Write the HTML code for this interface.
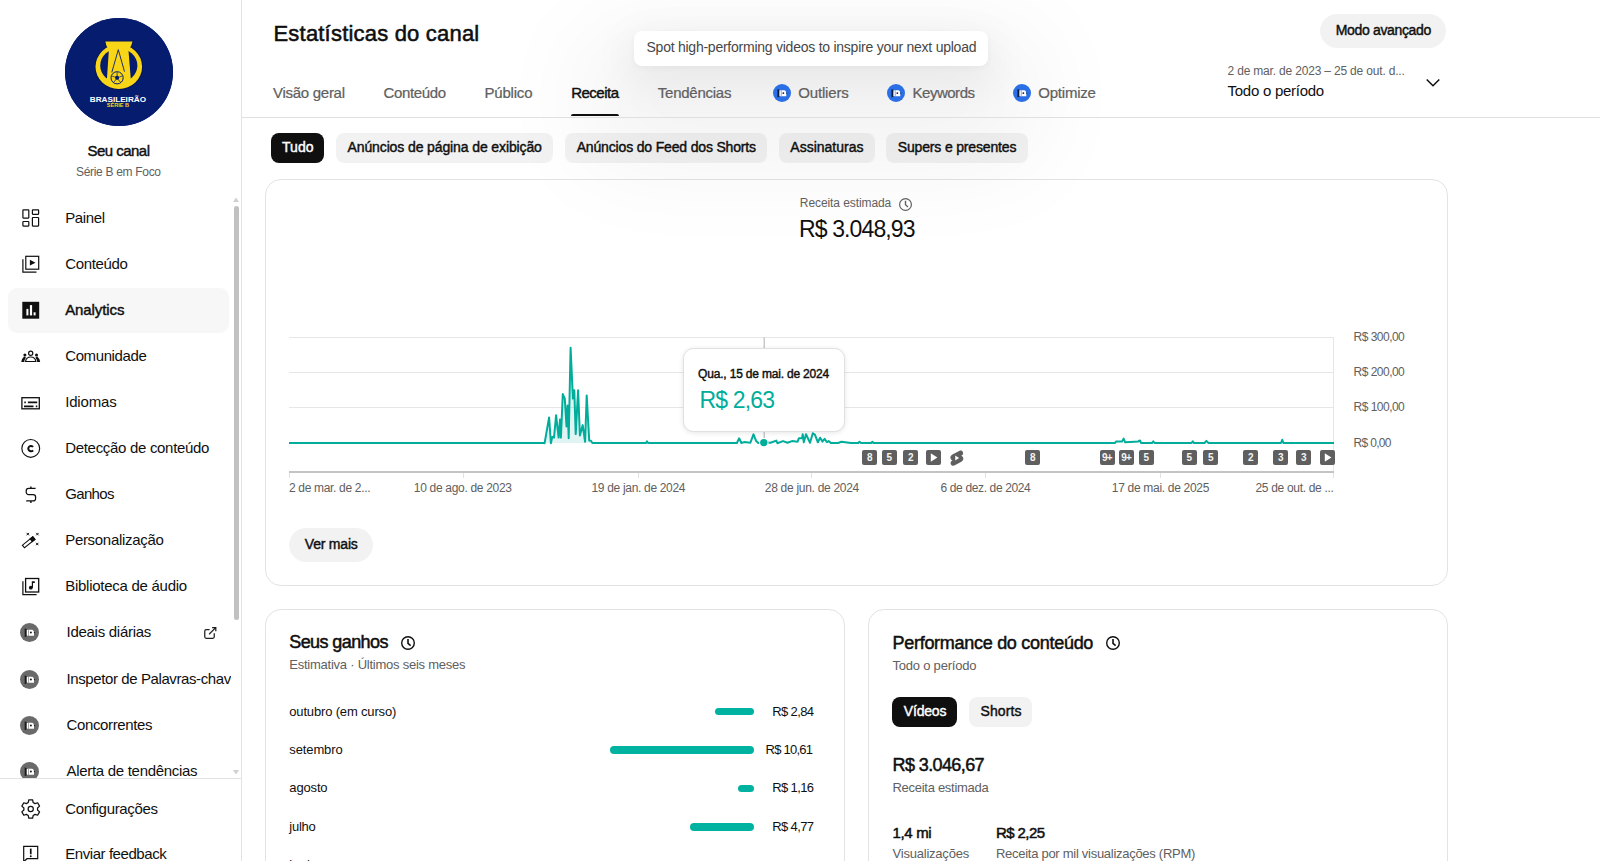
<!DOCTYPE html>
<html lang="pt-BR">
<head>
<meta charset="utf-8">
<title>Estatísticas do canal</title>
<style>
*{box-sizing:border-box;margin:0;padding:0}
html,body{width:1600px;height:861px;overflow:hidden;background:#fff}
body{font-family:"Liberation Sans",sans-serif;color:#0f0f0f;position:relative}
.a{position:absolute}
#side{position:absolute;z-index:6;left:0;top:0;width:242px;height:861px;border-right:1px solid #e3e3e3;background:#fff;overflow:hidden}
#main{position:absolute;left:0;top:0;width:1600px;height:861px;overflow:hidden}
.card{position:absolute;border:1px solid #e3e3e3;border-radius:16px;background:#fff}
.chip{position:absolute;height:30px;border-radius:8px;background:rgba(0,0,0,0.052)}
.chip.on{background:#0f0f0f}
.pill{position:absolute;background:rgba(0,0,0,0.052);border-radius:17px}
.gl{position:absolute;left:289px;width:1045px;height:1px;background:#e6e6e6}
.bd{position:absolute;top:450px;width:15px;height:15px;border-radius:2px;background:#5f5f5f;color:#f4f4f4;font-size:10px;font-weight:700;line-height:15px;text-align:center}
.iq{position:absolute;width:19px;height:19px;border-radius:50%;background:#6a6a6a}
</style>
</head>
<body>
<div id="main">
<div style="position:absolute;white-space:nowrap;line-height:1;top:23.13px;font-size:22px;color:#0f0f0f;letter-spacing:0.198px;-webkit-text-stroke:0.55px #0f0f0f;left:273.50px;">Estatísticas do canal</div>
<div class="a" style="left:634px;top:31px;width:354px;height:34.500px;border-radius:8px;background:#fff;box-shadow:0 50px 100px 50px rgba(0,0,0,0.05),0 12px 40px 8px rgba(0,0,0,0.05),0 2px 6px rgba(0,0,0,0.04);z-index:3"></div>
<div style="position:absolute;white-space:nowrap;line-height:1;top:40.35px;font-size:14px;color:#474747;letter-spacing:-0.245px;z-index:4;left:646.50px;">Spot high-performing videos to inspire your next upload</div>
<div style="position:absolute;white-space:nowrap;line-height:1;top:85.30px;font-size:15px;color:#606060;letter-spacing:-0.278px;-webkit-text-stroke:0.22px #606060;z-index:4;left:273.00px;">Visão geral</div>
<div style="position:absolute;white-space:nowrap;line-height:1;top:85.30px;font-size:15px;color:#606060;letter-spacing:-0.366px;-webkit-text-stroke:0.22px #606060;z-index:4;left:383.50px;">Conteúdo</div>
<div style="position:absolute;white-space:nowrap;line-height:1;top:85.30px;font-size:15px;color:#606060;letter-spacing:-0.201px;-webkit-text-stroke:0.22px #606060;z-index:4;left:484.50px;">Público</div>
<div style="position:absolute;white-space:nowrap;line-height:1;top:85.30px;font-size:15px;color:#0f0f0f;letter-spacing:-0.510px;-webkit-text-stroke:0.42px #0f0f0f;z-index:4;left:571.20px;">Receita</div>
<div style="position:absolute;white-space:nowrap;line-height:1;top:85.30px;font-size:15px;color:#606060;letter-spacing:-0.255px;-webkit-text-stroke:0.22px #606060;z-index:4;left:657.80px;">Tendências</div>
<div style="position:absolute;white-space:nowrap;line-height:1;top:85.30px;font-size:15px;color:#606060;letter-spacing:-0.184px;-webkit-text-stroke:0.22px #606060;z-index:4;left:798.30px;">Outliers</div>
<div style="position:absolute;white-space:nowrap;line-height:1;top:85.30px;font-size:15px;color:#606060;letter-spacing:-0.480px;-webkit-text-stroke:0.22px #606060;z-index:4;left:912.50px;">Keywords</div>
<div style="position:absolute;white-space:nowrap;line-height:1;top:85.30px;font-size:15px;color:#606060;letter-spacing:-0.227px;-webkit-text-stroke:0.22px #606060;z-index:4;left:1038.30px;">Optimize</div>
<div class="a" style="left:772.75px;top:84.200px;width:18px;height:18px;border-radius:50%;background:#2b6fe6;z-index:4"><svg viewBox="0 0 19 19" width="18" height="18" style="display:block"><path d="M4.700 5.200L7.600 6.700V12.800L4.700 14.300Z" fill="#0d1b3a"/><path d="M6.700 6.700H12.200Q14 7.300 14 9.200V12.800H6.700Z" fill="#fff"/><rect x="8.300" y="6.700" width="0.600" height="6.100" fill="#2b6fe6"/><circle cx="10.900" cy="9.600" r="1" fill="#0d1b3a"/><circle cx="14.500" cy="9.600" r="0.650" fill="#0d1b3a"/></svg></div>
<div class="a" style="left:886.75px;top:84.200px;width:18px;height:18px;border-radius:50%;background:#2b6fe6;z-index:4"><svg viewBox="0 0 19 19" width="18" height="18" style="display:block"><path d="M4.700 5.200L7.600 6.700V12.800L4.700 14.300Z" fill="#0d1b3a"/><path d="M6.700 6.700H12.200Q14 7.300 14 9.200V12.800H6.700Z" fill="#fff"/><rect x="8.300" y="6.700" width="0.600" height="6.100" fill="#2b6fe6"/><circle cx="10.900" cy="9.600" r="1" fill="#0d1b3a"/><circle cx="14.500" cy="9.600" r="0.650" fill="#0d1b3a"/></svg></div>
<div class="a" style="left:1012.75px;top:84.200px;width:18px;height:18px;border-radius:50%;background:#2b6fe6;z-index:4"><svg viewBox="0 0 19 19" width="18" height="18" style="display:block"><path d="M4.700 5.200L7.600 6.700V12.800L4.700 14.300Z" fill="#0d1b3a"/><path d="M6.700 6.700H12.200Q14 7.300 14 9.200V12.800H6.700Z" fill="#fff"/><rect x="8.300" y="6.700" width="0.600" height="6.100" fill="#2b6fe6"/><circle cx="10.900" cy="9.600" r="1" fill="#0d1b3a"/><circle cx="14.500" cy="9.600" r="0.650" fill="#0d1b3a"/></svg></div>
<div class="a" style="left:570.500px;top:113.700px;width:48px;height:2.700px;background:#0f0f0f;border-radius:2px 2px 0 0;z-index:4"></div>
<div class="a" style="left:242px;top:116.600px;width:1358px;height:1px;background:#e0e0e0;z-index:4"></div>
<div class="pill" style="left:1319.700px;top:13.500px;width:126px;height:34.200px;z-index:4"></div>
<div style="position:absolute;white-space:nowrap;line-height:1;top:23.25px;font-size:14px;color:#0f0f0f;letter-spacing:-0.345px;-webkit-text-stroke:0.42px #0f0f0f;z-index:4;left:1335.80px;">Modo avançado</div>
<div style="position:absolute;white-space:nowrap;line-height:1;top:64.54px;font-size:12px;color:#606060;letter-spacing:-0.181px;z-index:4;left:1227.50px;">2 de mar. de 2023 – 25 de out. d...</div>
<div style="position:absolute;white-space:nowrap;line-height:1;top:82.70px;font-size:15px;color:#0f0f0f;letter-spacing:-0.260px;z-index:4;left:1227.50px;">Todo o período</div>
<svg class="a" style="left:1423.600px;top:74px;z-index:4" width="18" height="18" viewBox="0 0 18 18"><path d="M2.700 5.500l6.300 6.300 6.300-6.300" fill="none" stroke="#0f0f0f" stroke-width="1.500"/></svg>
<div class="chip on" style="left:270.7px;top:133px;width:53.6px;z-index:4"></div>
<div style="position:absolute;white-space:nowrap;line-height:1;top:140.45px;font-size:14px;color:#fff;letter-spacing:0.036px;-webkit-text-stroke:0.42px #fff;z-index:4;left:282.00px;">Tudo</div>
<div class="chip" style="left:336px;top:133px;width:217.2px;z-index:4"></div>
<div style="position:absolute;white-space:nowrap;line-height:1;top:140.45px;font-size:14px;color:#0f0f0f;letter-spacing:-0.114px;-webkit-text-stroke:0.42px #0f0f0f;z-index:4;left:347.50px;">Anúncios de página de exibição</div>
<div class="chip" style="left:564.8px;top:133px;width:202.5px;z-index:4"></div>
<div style="position:absolute;white-space:nowrap;line-height:1;top:140.45px;font-size:14px;color:#0f0f0f;letter-spacing:-0.164px;-webkit-text-stroke:0.42px #0f0f0f;z-index:4;left:576.70px;">Anúncios do Feed dos Shorts</div>
<div class="chip" style="left:778.8px;top:133px;width:95.9px;z-index:4"></div>
<div style="position:absolute;white-space:nowrap;line-height:1;top:140.45px;font-size:14px;color:#0f0f0f;-webkit-text-stroke:0.42px #0f0f0f;z-index:4;left:790.30px;">Assinaturas</div>
<div class="chip" style="left:886.3px;top:133px;width:141.3px;z-index:4"></div>
<div style="position:absolute;white-space:nowrap;line-height:1;top:140.45px;font-size:14px;color:#0f0f0f;letter-spacing:-0.165px;-webkit-text-stroke:0.42px #0f0f0f;z-index:4;left:897.80px;">Supers e presentes</div>
<div class="card" style="left:265px;top:179px;width:1183px;height:407px"></div>
<div style="position:absolute;white-space:nowrap;line-height:1;top:197.34px;font-size:12px;color:#606060;letter-spacing:-0.085px;z-index:4;left:799.80px;">Receita estimada</div>
<svg class="a" style="left:898.25px;top:196.50px;z-index:4" width="15" height="15" viewBox="0 0 15 15"><circle cx="7.5" cy="7.5" r="5.9" fill="none" stroke="#606060" stroke-width="1.2"/><path d="M7.5 3.84V7.8l2.48 2.12" fill="none" stroke="#606060" stroke-width="1.4"/></svg>
<div style="position:absolute;white-space:nowrap;line-height:1;top:218.03px;font-size:23px;color:#0f0f0f;letter-spacing:-0.883px;z-index:4;left:799.00px;">R$ 3.048,93</div>
<div class="gl" style="top:336.7px"></div>
<div class="gl" style="top:371.7px"></div>
<div class="gl" style="top:406.7px"></div>
<div class="a" style="left:1333.300px;top:337px;width:1px;height:135px;background:#e6e6e6"></div>
<div style="position:absolute;white-space:nowrap;line-height:1;top:331.34px;font-size:12px;color:#606060;letter-spacing:-0.511px;left:1353.50px;">R$ 300,00</div>
<div style="position:absolute;white-space:nowrap;line-height:1;top:366.44px;font-size:12px;color:#606060;letter-spacing:-0.511px;left:1353.50px;">R$ 200,00</div>
<div style="position:absolute;white-space:nowrap;line-height:1;top:401.44px;font-size:12px;color:#606060;letter-spacing:-0.511px;left:1353.50px;">R$ 100,00</div>
<div style="position:absolute;white-space:nowrap;line-height:1;top:436.54px;font-size:12px;color:#606060;letter-spacing:-0.672px;left:1353.50px;">R$ 0,00</div>
<div class="a" style="left:289px;top:470.800px;width:1045px;height:1.800px;background:#c4c4c4"></div>
<div class="a" style="left:289.0px;top:472.500px;width:1px;height:5px;background:#e2e2e2"></div>
<div class="a" style="left:462.5px;top:472.500px;width:1px;height:5px;background:#e2e2e2"></div>
<div class="a" style="left:637.5px;top:472.500px;width:1px;height:5px;background:#e2e2e2"></div>
<div class="a" style="left:811.0px;top:472.500px;width:1px;height:5px;background:#e2e2e2"></div>
<div class="a" style="left:985.0px;top:472.500px;width:1px;height:5px;background:#e2e2e2"></div>
<div class="a" style="left:1159.5px;top:472.500px;width:1px;height:5px;background:#e2e2e2"></div>
<div class="a" style="left:1332.8px;top:472.500px;width:1px;height:5px;background:#e2e2e2"></div>
<div style="position:absolute;white-space:nowrap;line-height:1;top:481.59px;font-size:12px;color:#606060;letter-spacing:-0.326px;left:289.00px;">2 de mar. de 2...</div>
<div style="position:absolute;white-space:nowrap;line-height:1;top:481.59px;font-size:12px;color:#606060;letter-spacing:-0.308px;left:413.80px;">10 de ago. de 2023</div>
<div style="position:absolute;white-space:nowrap;line-height:1;top:481.59px;font-size:12px;color:#606060;letter-spacing:-0.319px;left:591.50px;">19 de jan. de 2024</div>
<div style="position:absolute;white-space:nowrap;line-height:1;top:481.59px;font-size:12px;color:#606060;letter-spacing:-0.292px;left:764.80px;">28 de jun. de 2024</div>
<div style="position:absolute;white-space:nowrap;line-height:1;top:481.59px;font-size:12px;color:#606060;letter-spacing:-0.362px;left:940.50px;">6 de dez. de 2024</div>
<div style="position:absolute;white-space:nowrap;line-height:1;top:481.59px;font-size:12px;color:#606060;letter-spacing:-0.303px;left:1111.80px;">17 de mai. de 2025</div>
<div style="position:absolute;white-space:nowrap;line-height:1;top:481.59px;font-size:12px;color:#606060;letter-spacing:-0.319px;left:1255.50px;">25 de out. de ...</div>
<svg class="a" style="left:0;top:0;z-index:2" width="1600" height="500" viewBox="0 0 1600 500"><g transform="translate(0 0.3)"><path d="M764.250 337V441" stroke="#c9c9c9" stroke-width="1.500"/><path d="M544.6 442.7 L544.6 442.9 L549.1 417.1 L550.9 442.9 L552.3 436.6 L554.0 437.3 L556.1 415.0 L558.6 437.3 L560.0 419.2 L560.9 437.3 L562.8 393.8 L564.8 398.3 L566.5 426.2 L567.6 405.3 L568.7 438.0 L570.6 347.4 L572.9 398.3 L574.3 389.9 L575.7 433.8 L578.1 389.9 L579.9 435.2 L582.7 424.8 L585.1 441.5 L586.7 395.2 L589.2 440.1 L590.9 440.4 L592.4 442.7 Z" fill="#00ad9b" fill-opacity="0.12"/><path d="M289.0 442.7 L544.0 442.7 L544.6 442.9 L549.1 417.1 L550.9 442.9 L552.3 436.6 L554.0 437.3 L556.1 415.0 L558.6 437.3 L560.0 419.2 L560.9 437.3 L562.8 393.8 L564.8 398.3 L566.5 426.2 L567.6 405.3 L568.7 438.0 L570.6 347.4 L572.9 398.3 L574.3 389.9 L575.7 433.8 L578.1 389.9 L579.9 435.2 L582.7 424.8 L585.1 441.5 L586.7 395.2 L589.2 440.1 L590.9 440.4 L592.4 442.7 L646.0 442.7 L647.0 441.0 L648.0 442.7 L736.9 442.7 L739.1 438.0 L741.4 442.7 L744.0 441.8 L750.4 442.4 L753.5 434.1 L756.2 440.8 L758.3 442.7 L764.0 441.9 L770.6 442.4 L776.3 440.3 L777.4 442.9 L783.0 440.8 L787.5 442.5 L792.0 440.8 L797.6 441.4 L798.8 438.0 L802.0 438.0 L802.7 434.0 L803.8 442.0 L806.0 434.0 L810.0 442.5 L812.8 433.0 L815.0 434.6 L817.9 442.0 L820.1 437.4 L822.4 441.3 L824.6 438.6 L826.9 441.9 L828.6 440.8 L830.8 442.7 L838.0 442.7 L841.5 441.4 L847.0 442.2 L851.0 442.7 L858.3 442.7 L859.5 441.4 L861.0 442.7 L871.2 442.7 L872.4 441.4 L873.5 442.7 L1115.0 442.7 L1116.0 441.3 L1122.0 441.3 L1123.6 438.3 L1125.2 442.0 L1134.5 441.4 L1138.0 441.2 L1140.0 440.2 L1141.0 442.6 L1152.0 442.7 L1153.3 441.1 L1154.5 442.7 L1191.5 442.7 L1192.7 441.1 L1194.0 442.7 L1204.5 442.7 L1206.4 440.6 L1208.5 442.7 L1281.0 442.7 L1282.2 439.5 L1283.4 442.7 L1334.0 442.7" fill="none" stroke="#00ad9b" stroke-width="2" stroke-linejoin="round"/><circle cx="763.800" cy="442.300" r="4.700" fill="#fff"/><circle cx="763.800" cy="442.300" r="3.700" fill="#00ad9b"/></g></svg>
<div class="bd" style="left:862.2px">8</div>
<div class="bd" style="left:881.8px">5</div>
<div class="bd" style="left:903.3px">2</div>
<div class="bd" style="left:1025.4px">8</div>
<div class="bd" style="left:1099.8px;letter-spacing:-0.8px;text-indent:-1px">9+</div>
<div class="bd" style="left:1119.2px;letter-spacing:-0.8px;text-indent:-1px">9+</div>
<div class="bd" style="left:1138.8px">5</div>
<div class="bd" style="left:1181.9px">5</div>
<div class="bd" style="left:1203.4px">5</div>
<div class="bd" style="left:1243.4px">2</div>
<div class="bd" style="left:1273.4px">3</div>
<div class="bd" style="left:1296.2px">3</div>
<div class="bd" style="left:925.8px"><svg width="15" height="15" viewBox="0 0 15 15" style="display:block"><path d="M4.800 3.200l6.600 4.300-6.600 4.300z" fill="#fff"/></svg></div>
<div class="bd" style="left:1320px"><svg width="15" height="15" viewBox="0 0 15 15" style="display:block"><path d="M4.800 3.200l6.600 4.300-6.600 4.300z" fill="#fff"/></svg></div>
<svg class="a" style="left:948.300px;top:448.800px" width="17.500" height="18" viewBox="0 0 16 16"><path d="M10.200 1.600L4 4.900c-1.700.9-2.200 2.600-1.500 4 .4.800 1 1.200 1.700 1.400l-.6.300c-1.300.8-1.500 2.300-.9 3.300.7 1.200 2.200 1.500 3.500.8l6-3.300c1.700-.9 2.200-2.600 1.500-4-.4-.8-1-1.200-1.700-1.400l.6-.3c1.300-.8 1.500-2.300.9-3.300-.7-1.200-2.100-1.500-3.300-.8z" fill="#5f5f5f"/><path d="M6.600 5.800l3.600 2.200-3.600 2.200z" fill="#fff"/></svg>
<div class="a" style="left:682.600px;top:348.400px;width:162px;height:83.200px;border-radius:10.500px;background:#fff;border:1px solid #e0e0e0;box-shadow:0 1px 5px rgba(0,0,0,0.10);z-index:3"></div>
<div style="position:absolute;white-space:nowrap;line-height:1;top:367.84px;font-size:12px;color:#0f0f0f;letter-spacing:-0.186px;-webkit-text-stroke:0.42px #0f0f0f;z-index:4;left:698.10px;">Qua., 15 de mai. de 2024</div>
<div style="position:absolute;white-space:nowrap;line-height:1;top:388.53px;font-size:23px;color:#00ad9b;letter-spacing:-0.844px;z-index:4;left:699.50px;">R$ 2,63</div>
<div class="pill" style="left:288.500px;top:527.700px;width:84px;height:34px"></div>
<div style="position:absolute;white-space:nowrap;line-height:1;top:536.75px;font-size:14px;color:#0f0f0f;letter-spacing:-0.210px;-webkit-text-stroke:0.42px #0f0f0f;left:304.80px;">Ver mais</div>
<div class="card" style="left:265px;top:609.400px;width:579.600px;height:300px"></div>
<div class="card" style="left:868px;top:609.400px;width:580px;height:300px"></div>
<div style="position:absolute;white-space:nowrap;line-height:1;top:632.76px;font-size:18px;color:#0f0f0f;letter-spacing:-0.599px;-webkit-text-stroke:0.5px #0f0f0f;left:289.30px;">Seus ganhos</div>
<svg class="a" style="left:400.00px;top:635.00px;z-index:4" width="16" height="16" viewBox="0 0 16 16"><circle cx="8.0" cy="8.0" r="6.3" fill="none" stroke="#0f0f0f" stroke-width="1.4"/><path d="M8.0 4.09V8.3l2.65 2.27" fill="none" stroke="#0f0f0f" stroke-width="1.5999999999999999"/></svg>
<div style="position:absolute;white-space:nowrap;line-height:1;top:658.40px;font-size:13px;color:#606060;letter-spacing:-0.243px;left:289.30px;">Estimativa · Últimos seis meses</div>
<div style="position:absolute;white-space:nowrap;line-height:1;top:704.50px;font-size:13px;color:#0f0f0f;letter-spacing:-0.166px;left:289.30px;">outubro (em curso)</div>
<div class="a" style="left:715.3px;top:707.9px;width:38.6px;height:7.600px;border-radius:4px;background:#00b3a1"></div>
<div style="position:absolute;white-space:nowrap;line-height:1;top:704.50px;font-size:13px;color:#0f0f0f;letter-spacing:-0.641px;left:772.30px;">R$ 2,84</div>
<div style="position:absolute;white-space:nowrap;line-height:1;top:743.10px;font-size:13px;color:#0f0f0f;letter-spacing:-0.115px;left:289.30px;">setembro</div>
<div class="a" style="left:610.1px;top:746.2px;width:143.8px;height:7.600px;border-radius:4px;background:#00b3a1"></div>
<div style="position:absolute;white-space:nowrap;line-height:1;top:743.10px;font-size:13px;color:#0f0f0f;letter-spacing:-0.738px;left:765.50px;">R$ 10,61</div>
<div style="position:absolute;white-space:nowrap;line-height:1;top:781.20px;font-size:13px;color:#0f0f0f;letter-spacing:-0.149px;left:289.30px;">agosto</div>
<div class="a" style="left:737.6px;top:784.6px;width:16.3px;height:7.600px;border-radius:4px;background:#00b3a1"></div>
<div style="position:absolute;white-space:nowrap;line-height:1;top:781.20px;font-size:13px;color:#0f0f0f;letter-spacing:-0.641px;left:772.30px;">R$ 1,16</div>
<div style="position:absolute;white-space:nowrap;line-height:1;top:819.80px;font-size:13px;color:#0f0f0f;letter-spacing:-0.242px;left:289.30px;">julho</div>
<div class="a" style="left:689.8px;top:823.0px;width:64.1px;height:7.600px;border-radius:4px;background:#00b3a1"></div>
<div style="position:absolute;white-space:nowrap;line-height:1;top:819.80px;font-size:13px;color:#0f0f0f;letter-spacing:-0.641px;left:772.30px;">R$ 4,77</div>
<div style="position:absolute;white-space:nowrap;line-height:1;top:857.90px;font-size:13px;color:#0f0f0f;letter-spacing:0.097px;left:289.30px;">junho</div>
<div class="a" style="left:740px;top:861.4px;width:13.9px;height:7.600px;border-radius:4px;background:#00b3a1"></div>
<div style="position:absolute;white-space:nowrap;line-height:1;top:859.10px;font-size:13px;color:#0f0f0f;letter-spacing:-0.641px;left:772.30px;">R$ 0,95</div>
<div style="position:absolute;white-space:nowrap;line-height:1;top:633.66px;font-size:18px;color:#0f0f0f;letter-spacing:-0.284px;-webkit-text-stroke:0.5px #0f0f0f;left:892.50px;">Performance do conteúdo</div>
<svg class="a" style="left:1104.75px;top:635.20px;z-index:4" width="16" height="16" viewBox="0 0 16 16"><circle cx="8.0" cy="8.0" r="6.3" fill="none" stroke="#0f0f0f" stroke-width="1.4"/><path d="M8.0 4.09V8.3l2.65 2.27" fill="none" stroke="#0f0f0f" stroke-width="1.5999999999999999"/></svg>
<div style="position:absolute;white-space:nowrap;line-height:1;top:658.90px;font-size:13px;color:#606060;letter-spacing:-0.218px;left:892.50px;">Todo o período</div>
<div class="chip on" style="left:891.900px;top:696.500px;width:65.600px;height:30.700px"></div>
<div style="position:absolute;white-space:nowrap;line-height:1;top:703.75px;font-size:14px;color:#fff;letter-spacing:-0.199px;-webkit-text-stroke:0.42px #fff;left:903.80px;">Vídeos</div>
<div class="chip" style="left:969.100px;top:696.500px;width:63px;height:30.700px"></div>
<div style="position:absolute;white-space:nowrap;line-height:1;top:703.75px;font-size:14px;color:#0f0f0f;letter-spacing:0.086px;-webkit-text-stroke:0.42px #0f0f0f;left:980.50px;">Shorts</div>
<div style="position:absolute;white-space:nowrap;line-height:1;top:756.26px;font-size:18px;color:#0f0f0f;letter-spacing:-0.598px;-webkit-text-stroke:0.5px #0f0f0f;left:892.50px;">R$ 3.046,67</div>
<div style="position:absolute;white-space:nowrap;line-height:1;top:780.70px;font-size:13px;color:#606060;letter-spacing:-0.284px;left:892.50px;">Receita estimada</div>
<div style="position:absolute;white-space:nowrap;line-height:1;top:825.10px;font-size:15px;color:#0f0f0f;letter-spacing:-0.332px;-webkit-text-stroke:0.5px #0f0f0f;left:892.50px;">1,4 mi</div>
<div style="position:absolute;white-space:nowrap;line-height:1;top:825.10px;font-size:15px;color:#0f0f0f;letter-spacing:-0.591px;-webkit-text-stroke:0.5px #0f0f0f;left:996.00px;">R$ 2,25</div>
<div style="position:absolute;white-space:nowrap;line-height:1;top:846.70px;font-size:13px;color:#606060;letter-spacing:-0.214px;left:892.50px;">Visualizações</div>
<div style="position:absolute;white-space:nowrap;line-height:1;top:846.70px;font-size:13px;color:#606060;letter-spacing:-0.279px;left:996.00px;">Receita por mil visualizações (RPM)</div>
</div>
<div id="side">
<div class="a" style="left:65px;top:18px;width:108px;height:108px;border-radius:50%;background:#051b6e;overflow:hidden"><svg viewBox="0 0 108 108" width="108" height="108" style="display:block"><rect width="108" height="108" fill="#061c6f"/>
<ellipse cx="53.800" cy="48.900" rx="24.300" ry="23.300" fill="#04145a"/>
<path d="M39.300 22.600H68.500Q67.800 28.500 64.400 31.800L67.300 66H40.500L42.900 31.800Q39.900 28.500 39.300 22.600Z" fill="#04145a"/>
<ellipse cx="53.800" cy="48.700" rx="23.300" ry="22.300" fill="#f8d517"/>
<ellipse cx="53.800" cy="47.600" rx="18.600" ry="17" fill="#061c6f"/>
<path d="M40.300 23.600H67.500Q66.800 28.500 63.400 31.400L66.200 66H41.600L43.900 31.400Q40.900 28.500 40.300 23.600Z" fill="#f8d517"/>
<path d="M46.800 54.400L53.300 31.700L59.500 53.600" stroke="#061c6f" stroke-width="0.900" fill="none"/>
<circle cx="52.100" cy="59.800" r="6.100" fill="#f8d517" stroke="#061c6f" stroke-width="1"/>
<path d="M52.100 57.300l2.300 1.700-.9 2.700h-2.800l-.9-2.700z" fill="#061c6f"/>
<path d="M52.100 57.300v-3.300M54.400 59l3.200-1.100M53.500 61.700l2 2.800M50.700 61.700l-2 2.800M49.800 59l-3.200-1.100" stroke="#061c6f" stroke-width="0.700"/>
<text x="52.900" y="84.200" text-anchor="middle" font-family="Liberation Sans, sans-serif" font-weight="700" font-size="6.800" textLength="56.300" lengthAdjust="spacingAndGlyphs" fill="#fff">BRASILEIRÃO</text>
<text x="52.900" y="88.700" text-anchor="middle" font-family="Liberation Sans, sans-serif" font-weight="700" font-size="4.600" textLength="22.300" lengthAdjust="spacingAndGlyphs" fill="#f8d517">SÉRIE B</text>
</svg></div>
<div style="position:absolute;white-space:nowrap;line-height:1;top:143.30px;font-size:15px;color:#0f0f0f;letter-spacing:-0.527px;-webkit-text-stroke:0.42px #0f0f0f;left:87.50px;">Seu canal</div>
<div style="position:absolute;white-space:nowrap;line-height:1;top:165.59px;font-size:12px;color:#606060;letter-spacing:-0.312px;left:76.00px;">Série B em Foco</div>
<div class="a" style="left:0;top:0;width:231px;height:778px;overflow:hidden">
<div class="a" style="left:19px;top:206.2px;width:24px;height:24px"><svg viewBox="0 0 24 24" width="24" height="24" fill="none" stroke="#0f0f0f" stroke-width="1.200"><rect x="3.900" y="3.800" width="5.900" height="8.300" rx="0.500"/><rect x="13.400" y="3.800" width="6.200" height="4.500" rx="0.500"/><rect x="3.900" y="15.500" width="5.900" height="4.600" rx="0.500"/><rect x="13.400" y="11.500" width="6.200" height="8.600" rx="0.500"/></svg></div>
<div style="position:absolute;white-space:nowrap;line-height:1;top:210.40px;font-size:15px;color:#0f0f0f;letter-spacing:-0.381px;left:65.20px;">Painel</div>
<div class="a" style="left:19px;top:252.2px;width:24px;height:24px"><svg viewBox="0 0 24 24" width="24" height="24" fill="none" stroke="#0f0f0f" stroke-width="1.200"><rect x="6.800" y="4.300" width="12.900" height="12.900"/><path d="M3.900 7.200V20.200H17.500"/><path d="M10.900 7.800l5.600 2.900-5.600 2.900z" fill="#0f0f0f" stroke="none"/></svg></div>
<div style="position:absolute;white-space:nowrap;line-height:1;top:256.40px;font-size:15px;color:#0f0f0f;letter-spacing:-0.337px;left:65.20px;">Conteúdo</div>
<div class="a" style="left:8px;top:287.5px;width:221px;height:45.500px;border-radius:9px;background:#f7f7f7"></div>
<div class="a" style="left:19px;top:298.2px;width:24px;height:24px"><svg viewBox="0 0 24 24" width="24" height="24"><rect x="3.300" y="3.800" width="16.900" height="16.900" fill="#0f0f0f"/><rect x="7.400" y="10.900" width="2" height="6.500" fill="#fff"/><rect x="10.900" y="7.100" width="2.200" height="10.300" fill="#fff"/><rect x="14.600" y="14.300" width="2" height="3.100" fill="#fff"/></svg></div>
<div style="position:absolute;white-space:nowrap;line-height:1;top:302.40px;font-size:15px;color:#0f0f0f;letter-spacing:-0.091px;-webkit-text-stroke:0.42px #0f0f0f;left:65.20px;">Analytics</div>
<div class="a" style="left:19px;top:344.2px;width:24px;height:24px"><svg viewBox="0 0 24 24" width="24" height="24" fill="none" stroke="#0f0f0f" stroke-width="1.200"><circle cx="11.700" cy="9.300" r="2.100"/><path d="M6.500 17.500c.5-3 2.500-4.500 5.200-4.500s4.700 1.500 5.200 4.500z"/><circle cx="5.900" cy="10.900" r="1.500" fill="#0f0f0f" stroke="none"/><circle cx="17.500" cy="10.900" r="1.500" fill="#0f0f0f" stroke="none"/><path d="M5.100 12.400L7 13.400Q5.500 15.200 5.200 18.100H2.200Q2.800 14.200 5.100 12.400zM18.300 12.400L16.400 13.400Q17.900 15.200 18.200 18.100H21.200Q20.600 14.200 18.300 12.400z" fill="#0f0f0f" stroke="none"/></svg></div>
<div style="position:absolute;white-space:nowrap;line-height:1;top:348.40px;font-size:15px;color:#0f0f0f;letter-spacing:-0.385px;left:65.20px;">Comunidade</div>
<div class="a" style="left:19px;top:390.2px;width:24px;height:24px"><svg viewBox="0 0 24 24" width="24" height="24" fill="none" stroke="#0f0f0f" stroke-width="1.200"><rect x="2.900" y="7.700" width="17.400" height="11.100" stroke-width="1.300"/><path d="M5.300 12.400h1.500M8.900 12.400h9.300M5 16.400h9.500M16.800 16.400h1.500" stroke-width="1.700"/></svg></div>
<div style="position:absolute;white-space:nowrap;line-height:1;top:394.40px;font-size:15px;color:#0f0f0f;letter-spacing:-0.172px;left:65.20px;">Idiomas</div>
<div class="a" style="left:19px;top:436.2px;width:24px;height:24px"><svg viewBox="0 0 24 24" width="24" height="24" fill="none" stroke="#0f0f0f" stroke-width="1.200"><circle cx="11.750" cy="12.400" r="8.900" stroke-width="1.150"/><path d="M14.100 10.900a2.700 2.700 0 1 0 0 3.400" stroke-width="2"/></svg></div>
<div style="position:absolute;white-space:nowrap;line-height:1;top:440.40px;font-size:15px;color:#0f0f0f;letter-spacing:-0.307px;left:65.20px;">Detecção de conteúdo</div>
<div class="a" style="left:19px;top:482.2px;width:24px;height:24px"><svg viewBox="0 0 24 24" width="24" height="24" fill="none" stroke="#0f0f0f" stroke-width="1.200"><path d="M16.600 6.300H9.700a2.500 2.500 0 0 0-2.500 2.500v1.300a2.500 2.500 0 0 0 2.500 2.500h4.400a2.500 2.500 0 0 1 2.500 2.500v1.300a2.500 2.500 0 0 1-2.500 2.500H7.200" stroke-width="1.250"/><path d="M11.900 4.400v1.900M11.900 18.900v2.100" stroke-width="1.400"/></svg></div>
<div style="position:absolute;white-space:nowrap;line-height:1;top:486.40px;font-size:15px;color:#0f0f0f;letter-spacing:-0.649px;left:65.20px;">Ganhos</div>
<div class="a" style="left:19px;top:528.2px;width:24px;height:24px"><svg viewBox="0 0 24 24" width="24" height="24" fill="none" stroke="#0f0f0f" stroke-width="1.200"><g transform="translate(9.650 14.300) rotate(-39)"><rect x="-6.700" y="-1.650" width="13.400" height="3.300" stroke-width="1.100"/><rect x="3.400" y="-1.650" width="3.300" height="3.300" fill="#0f0f0f"/></g><path d="M7.600 4.900l2.400 2.400M10 4.900L7.600 7.300M17.200 4.900l2.400 2.400M19.600 4.900l-2.400 2.400M17 14.800l2.400 2.400M19.400 14.800l-2.400 2.400" stroke-width="1"/></svg></div>
<div style="position:absolute;white-space:nowrap;line-height:1;top:532.40px;font-size:15px;color:#0f0f0f;letter-spacing:-0.305px;left:65.20px;">Personalização</div>
<div class="a" style="left:19px;top:574.2px;width:24px;height:24px"><svg viewBox="0 0 24 24" width="24" height="24" fill="none" stroke="#0f0f0f" stroke-width="1.200"><rect x="6.600" y="4.500" width="13.100" height="13.500" stroke-width="1.300"/><path d="M3.900 7.200V20.700H17.600"/><circle cx="11.800" cy="13.700" r="1.900" fill="#0f0f0f" stroke="none"/><path d="M12.800 13.700V7.300h3v1.600h-1.800v4.800z" fill="#0f0f0f" stroke="none"/></svg></div>
<div style="position:absolute;white-space:nowrap;line-height:1;top:578.40px;font-size:15px;color:#0f0f0f;letter-spacing:-0.265px;left:65.20px;">Biblioteca de áudio</div>
<div class="iq" style="left:20.200px;top:623.1px"><svg viewBox="0 0 19 19" width="19" height="19" style="display:block"><path d="M4.700 5.200L7.600 6.700V12.800L4.700 14.300Z" fill="#1a1a1a"/><path d="M6.700 6.700H12.200Q14 7.300 14 9.200V12.800H6.700Z" fill="#fff"/><rect x="8.300" y="6.700" width="0.600" height="6.100" fill="#6a6a6a"/><circle cx="10.900" cy="9.600" r="1" fill="#1a1a1a"/><circle cx="14.500" cy="9.600" r="0.650" fill="#1a1a1a"/></svg></div>
<div style="position:absolute;white-space:nowrap;line-height:1;top:624.40px;font-size:15px;color:#0f0f0f;letter-spacing:-0.276px;left:66.50px;">Ideais diárias</div>
<div class="iq" style="left:20.200px;top:670.1px"><svg viewBox="0 0 19 19" width="19" height="19" style="display:block"><path d="M4.700 5.200L7.600 6.700V12.800L4.700 14.300Z" fill="#1a1a1a"/><path d="M6.700 6.700H12.200Q14 7.300 14 9.200V12.800H6.700Z" fill="#fff"/><rect x="8.300" y="6.700" width="0.600" height="6.100" fill="#6a6a6a"/><circle cx="10.900" cy="9.600" r="1" fill="#1a1a1a"/><circle cx="14.500" cy="9.600" r="0.650" fill="#1a1a1a"/></svg></div>
<div style="position:absolute;white-space:nowrap;line-height:1;top:671.40px;font-size:15px;color:#0f0f0f;letter-spacing:-0.400px;left:66.50px;">Inspetor de Palavras-chave</div>
<div class="iq" style="left:20.200px;top:716.1px"><svg viewBox="0 0 19 19" width="19" height="19" style="display:block"><path d="M4.700 5.200L7.600 6.700V12.800L4.700 14.300Z" fill="#1a1a1a"/><path d="M6.700 6.700H12.200Q14 7.300 14 9.200V12.800H6.700Z" fill="#fff"/><rect x="8.300" y="6.700" width="0.600" height="6.100" fill="#6a6a6a"/><circle cx="10.900" cy="9.600" r="1" fill="#1a1a1a"/><circle cx="14.500" cy="9.600" r="0.650" fill="#1a1a1a"/></svg></div>
<div style="position:absolute;white-space:nowrap;line-height:1;top:717.40px;font-size:15px;color:#0f0f0f;letter-spacing:-0.368px;left:66.50px;">Concorrentes</div>
<div class="iq" style="left:20.200px;top:762.1px"><svg viewBox="0 0 19 19" width="19" height="19" style="display:block"><path d="M4.700 5.200L7.600 6.700V12.800L4.700 14.300Z" fill="#1a1a1a"/><path d="M6.700 6.700H12.200Q14 7.300 14 9.200V12.800H6.700Z" fill="#fff"/><rect x="8.300" y="6.700" width="0.600" height="6.100" fill="#6a6a6a"/><circle cx="10.900" cy="9.600" r="1" fill="#1a1a1a"/><circle cx="14.500" cy="9.600" r="0.650" fill="#1a1a1a"/></svg></div>
<div style="position:absolute;white-space:nowrap;line-height:1;top:763.40px;font-size:15px;color:#0f0f0f;letter-spacing:-0.298px;left:66.50px;">Alerta de tendências</div>
<svg class="a" style="left:203px;top:626px" viewBox="0 0 14 14" width="14" height="14" fill="none" stroke="#1f1f1f" stroke-width="1.250"><path d="M6.600 3.650H3.250a1.500 1.500 0 0 0-1.500 1.500V10.750a1.500 1.500 0 0 0 1.500 1.500H9.750a1.500 1.500 0 0 0 1.500-1.500V7.300"/><path d="M6.100 8.200L12.700 1.600M9.100 1.500H12.800V5.200"/></svg>
</div>
<div class="a" style="left:233.500px;top:206px;width:5.500px;height:414px;background:#c1c1c1;border-radius:3px"></div>
<svg class="a" style="left:232px;top:196px" width="8" height="8" viewBox="0 0 8 8"><path d="M1 6l3-4.500 3 4.500z" fill="#d0d0d0"/></svg>
<svg class="a" style="left:232px;top:768px" width="8" height="8" viewBox="0 0 8 8"><path d="M1 2l3 4.500 3-4.500z" fill="#d0d0d0"/></svg>
<div class="a" style="left:0;top:777.500px;width:241px;height:1px;background:#e3e3e3"></div>
<div class="a" style="left:19px;top:796.8px;width:24px;height:24px"><svg viewBox="0 0 24 24" width="24" height="24" fill="none" stroke="#0f0f0f" stroke-width="1.200" stroke-linejoin="round"><circle cx="11.700" cy="12" r="2.600"/><path d="M14.17 5.56 L13.63 2.90 L9.77 2.90 L9.23 5.56 L7.36 6.64 L4.79 5.78 L2.86 9.13 L4.88 10.92 L4.88 13.08 L2.86 14.87 L4.79 18.22 L7.36 17.36 L9.23 18.44 L9.77 21.10 L13.63 21.10 L14.17 18.44 L16.04 17.36 L18.61 18.22 L20.54 14.87 L18.52 13.08 L18.52 10.92 L20.54 9.13 L18.61 5.78 L16.04 6.64Z" stroke-width="1.250"/></svg></div>
<div style="position:absolute;white-space:nowrap;line-height:1;top:800.60px;font-size:15px;color:#0f0f0f;letter-spacing:-0.320px;left:65.20px;">Configurações</div>
<div class="a" style="left:19px;top:841.7px;width:24px;height:24px"><svg viewBox="0 0 24 24" width="24" height="24" fill="none" stroke="#0f0f0f" stroke-width="1.200"><path d="M4.700 4.300H18.700V16.700H8L4.700 19.700Z"/><path d="M11.750 6.600v5.700" stroke-width="1.700"/><circle cx="11.750" cy="14.200" r="0.950" fill="#0f0f0f" stroke="none"/></svg></div>
<div style="position:absolute;white-space:nowrap;line-height:1;top:845.50px;font-size:15px;color:#0f0f0f;letter-spacing:-0.427px;left:65.20px;">Enviar feedback</div>
</div>
</body>
</html>
